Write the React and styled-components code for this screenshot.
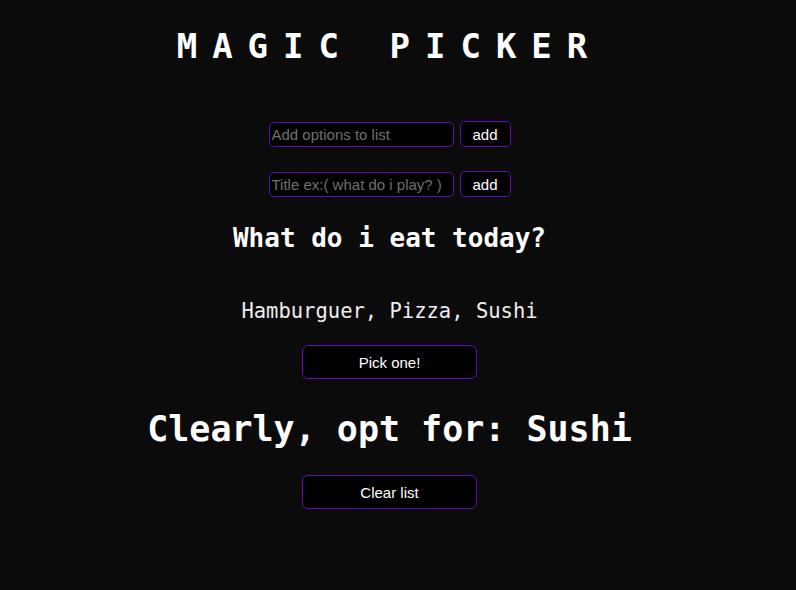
import React, { useState } from 'react';
import styled, { createGlobalStyle } from 'styled-components';

const GlobalStyle = createGlobalStyle`
  html, body {
    margin: 0;
    padding: 0;
    background: #0b0b0b;
  }
  body {
    font-family: 'Liberation Sans', Arial, sans-serif;
  }
`;

const mono = `'DejaVu Sans Mono', 'Liberation Mono', monospace`;
const purple = '#5e0eae';

const Page = styled.div`
  width: 779px;
  min-height: 590px;
  display: flex;
  flex-direction: column;
  align-items: center;
  color: #ffffff;
`;

const Title = styled.h1`
  margin: 26px 0 0;
  font-family: ${mono};
  font-size: 34px;
  line-height: 40px;
  font-weight: 700;
  letter-spacing: 15px;
`;

const InputRow = styled.div`
  display: flex;
  align-items: center;
  gap: 6px;
  height: 26px;
  margin-top: ${(p) => p.$top}px;
`;

const TextInput = styled.input`
  box-sizing: border-box;
  width: 185px;
  height: 25px;
  padding: 0 2px;
  background: #000;
  color: #fff;
  border: 1px solid ${purple};
  border-radius: 5px;
  font-family: 'Liberation Sans', Arial, sans-serif;
  font-size: 15px;
  outline: none;

  &::placeholder {
    color: #6f6f6f;
  }
`;

const SmallButton = styled.button`
  box-sizing: border-box;
  width: 51px;
  height: 26px;
  padding: 0;
  background: #000;
  color: #fff;
  border: 1px solid ${purple};
  border-radius: 5px;
  font-family: 'Liberation Sans', Arial, sans-serif;
  font-size: 15px;
  cursor: pointer;
`;

const ListTitle = styled.h2`
  margin: 26px 0 0;
  font-family: ${mono};
  font-size: 26px;
  line-height: 30px;
  font-weight: 700;
`;

const Options = styled.p`
  margin: 46px 0 0;
  font-family: ${mono};
  font-size: 20.5px;
  line-height: 24px;
  font-weight: 400;
  color: #eeeeee;
`;

const WideButton = styled.button`
  box-sizing: border-box;
  width: 175px;
  height: 34px;
  margin-top: ${(p) => p.$top}px;
  padding: 0;
  background: #000;
  color: #fff;
  border: 1px solid ${purple};
  border-radius: 6px;
  font-family: 'Liberation Sans', Arial, sans-serif;
  font-size: 15px;
  cursor: pointer;
`;

const Result = styled.h2`
  margin: 29px 0 0;
  font-family: ${mono};
  font-size: 35px;
  line-height: 42px;
  font-weight: 700;
`;

export default function App() {
  const [options, setOptions] = useState(['Hamburguer', 'Pizza', 'Sushi']);
  const [title, setTitle] = useState('What do i eat today?');
  const [option, setOption] = useState('');
  const [newTitle, setNewTitle] = useState('');
  const [picked, setPicked] = useState('Sushi');

  const addOption = () => {
    if (!option.trim()) return;
    setOptions([...options, option.trim()]);
    setOption('');
  };

  const changeTitle = () => {
    if (!newTitle.trim()) return;
    setTitle(newTitle.trim());
    setNewTitle('');
  };

  const pickOne = () => {
    if (!options.length) return;
    setPicked(options[Math.floor(Math.random() * options.length)]);
  };

  return (
    <>
      <GlobalStyle />
      <Page>
        <Title>MAGIC PICKER</Title>

        <InputRow $top={55}>
          <TextInput
            placeholder="Add options to list"
            value={option}
            onChange={(e) => setOption(e.target.value)}
          />
          <SmallButton onClick={addOption}>add</SmallButton>
        </InputRow>

        <InputRow $top={24}>
          <TextInput
            placeholder="Title ex:( what do i play? )"
            value={newTitle}
            onChange={(e) => setNewTitle(e.target.value)}
          />
          <SmallButton onClick={changeTitle}>add</SmallButton>
        </InputRow>

        <ListTitle>{title}</ListTitle>
        <Options>{options.join(', ')}</Options>

        <WideButton $top={22} onClick={pickOne}>Pick one!</WideButton>

        {picked && <Result>Clearly, opt for: {picked}</Result>}

        <WideButton
          $top={25}
          onClick={() => {
            setOptions([]);
            setPicked('');
          }}
        >
          Clear list
        </WideButton>
      </Page>
    </>
  );
}
